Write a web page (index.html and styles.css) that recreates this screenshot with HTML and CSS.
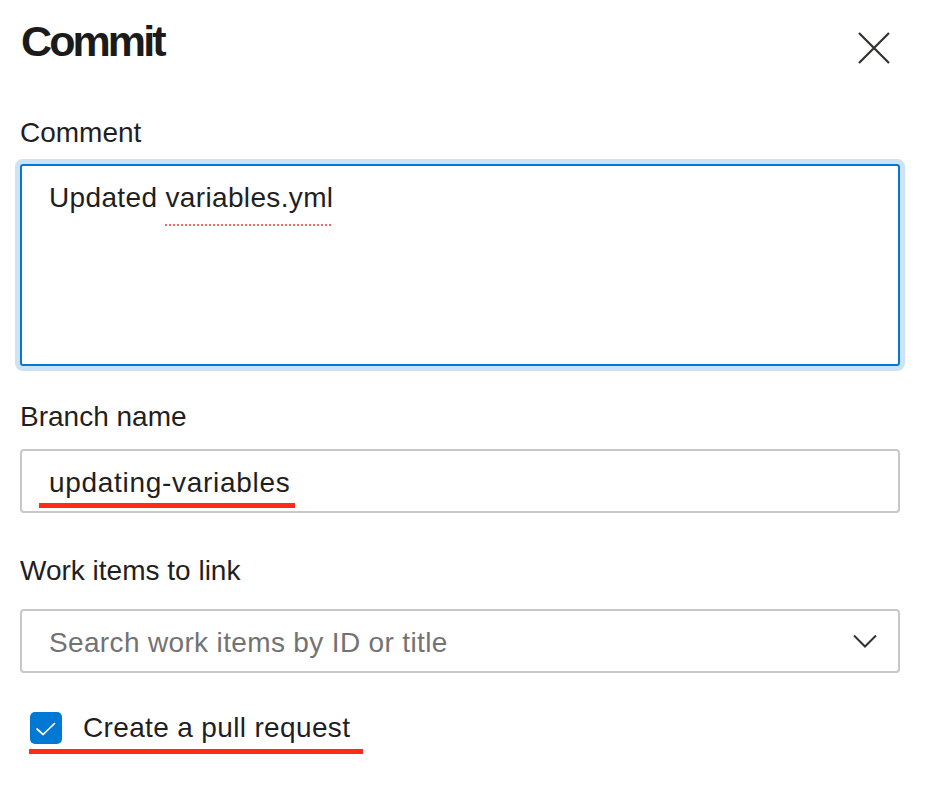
FILE: index.html
```html
<!DOCTYPE html>
<html lang="en">
<head>
<meta charset="utf-8">
<title>Commit</title>
<link rel="stylesheet" href="styles.css">
</head>
<body>
<div class="panel">
  <div class="header">
    <h1 class="title">Commit</h1>
    <button class="close" aria-label="Close">
      <svg width="32" height="32" viewBox="0 0 32 32"><path d="M1 1L31 31M31 1L1 31" stroke="#323130" stroke-width="2.2" fill="none"/></svg>
    </button>
  </div>

  <label class="label label-comment">Comment</label>
  <div class="field textarea">Updated <span class="spell">variables.yml</span></div>

  <label class="label label-branch">Branch name</label>
  <div class="field input"><span class="value marked">updating-variables</span></div>

  <label class="label label-work">Work items to link</label>
  <div class="field input select">
    <span class="placeholder">Search work items by ID or title</span>
    <svg class="chevron" width="24" height="14" viewBox="0 0 24 14"><path d="M1 1.5L12 12.5L23 1.5" stroke="#323130" stroke-width="2" fill="none"/></svg>
  </div>

  <div class="check-row">
    <span class="checkbox">
      <svg width="32" height="32" viewBox="0 0 32 32"><path d="M7 17L13.2 22.5L24.5 11.5" stroke="#ffffff" stroke-width="1.7" fill="none" stroke-linecap="round" stroke-linejoin="round"/></svg>
    </span>
    <span class="check-label">Create a pull request</span>
  </div>
</div>
</body>
</html>
```

FILE: styles.css
```css
html, body {
  margin: 0;
  background: #ffffff;
}

body {
  font-family: "Liberation Sans", Arial, sans-serif;
  color: #1f1f1f;
}

.panel {
  display: flex;
  flex-direction: column;
  padding: 15px 30px 0 20px;
}

.header {
  display: flex;
  justify-content: space-between;
  align-items: flex-start;
  height: 52px;
}

.title {
  margin: 0 0 0 1px;
  font-size: 43px;
  line-height: 52px;
  font-weight: 700;
  letter-spacing: -2.9px;
  color: #1b1b1b;
}

.close {
  margin: 17px 10px 0 0;
  padding: 0;
  width: 32px;
  height: 32px;
  border: 0;
  background: none;
  display: block;
}

.close svg {
  display: block;
}

.label {
  display: block;
  font-size: 28px;
  line-height: 36px;
}

.label-comment {
  margin-top: 48px;
}

.label-branch {
  margin-top: 33px;
}

.label-work {
  margin-top: 40px;
}

.field {
  box-sizing: border-box;
  border: 2px solid #c8c8c8;
  border-radius: 4px;
  padding: 14px 25px 0 27px;
  font-size: 28px;
  line-height: 36px;
  letter-spacing: 0.35px;
  color: #1f1f1f;
}

.textarea {
  margin-top: 13px;
  height: 202px;
  border-color: #0078d4;
  border-radius: 3px;
  box-shadow: 0 0 0 5px #cde3f5;
}

.spell {
  text-decoration: underline dotted #ef6b6b;
  text-decoration-thickness: 2px;
  text-underline-offset: 17px;
}

.input {
  margin-top: 14px;
  height: 64px;
}

.value {
  display: inline-block;
  letter-spacing: 0.7px;
}

.marked {
  position: relative;
}

.marked::after {
  content: "";
  position: absolute;
  left: -10px;
  right: -5px;
  top: 38px;
  height: 5px;
  background: #ff2d16;
}

.select {
  margin-top: 20px;
  display: flex;
  justify-content: space-between;
  align-items: flex-start;
  padding-right: 21px;
}

.placeholder {
  color: #737373;
}

.chevron {
  display: block;
  margin-top: 9px;
}

.check-row {
  align-self: flex-start;
  display: flex;
  align-items: flex-start;
  gap: 21px;
  margin: 37px 0 0 9px;
  padding: 0 13px 8px 1px;
  background: linear-gradient(#ff2d16, #ff2d16) left bottom / 100% 5px no-repeat;
}

.checkbox {
  width: 32px;
  height: 32px;
  margin-top: 2px;
  border-radius: 5px;
  background: #0078d4;
  display: block;
}

.checkbox svg {
  display: block;
}

.check-label {
  font-size: 28px;
  line-height: 36px;
  letter-spacing: 0.35px;
}
```
